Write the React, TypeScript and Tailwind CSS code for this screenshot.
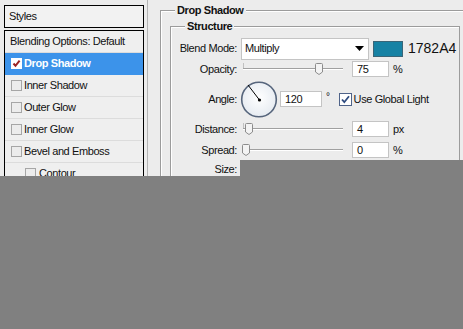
import React from "react";

function ListCheck({ checked = false }: { checked?: boolean }) {
  return (
    <svg width="11" height="11" viewBox="0 0 11 11" className="flex-none">
      <rect x="0.5" y="0.5" width="10" height="10" fill={checked ? "#ffffff" : "#ececec"} stroke={checked ? "#ffffff" : "#a6a6a6"} />
      {checked && <path d="M2.5 5.5 L4.5 7.8 L8.6 2.6" fill="none" stroke="#9b2323" strokeWidth="2" />}
    </svg>
  );
}

function Row({ children, selected = false, indent = false }: { children: React.ReactNode; selected?: boolean; indent?: boolean }) {
  return (
    <div
      className={
        "h-[22px] flex items-center border-b " +
        (selected ? "bg-[#3c93ea] border-[#3c93ea] text-white font-bold" : "bg-[#efefef] border-[#dcdcdc]") +
        (indent ? " pl-[20px]" : " pl-[6px]")
      }
    >
      {children}
    </div>
  );
}

function Slider({ pos }: { pos: number }) {
  return (
    <div className="relative ml-[6px] w-[100px] h-[16px] flex items-center">
      <div className="w-full h-[2px] border-t border-[#a0a0a0] bg-white" />
      <div className="absolute top-[2px] left-0 w-px h-[5px] bg-[#c0c0c0]" />
      <svg width="8" height="12" viewBox="0 0 8 12" className="absolute top-[2px]" style={{ left: pos }}>
        <path d="M1.5 0.5 H6.5 Q7.5 0.5 7.5 1.5 V9 L4 11.5 L0.5 9 V1.5 Q0.5 0.5 1.5 0.5 Z" fill="#f3f3f3" stroke="#8c8c8c" />
      </svg>
    </div>
  );
}

function Field({ value, w, ml }: { value: string; w: string; ml: string }) {
  return (
    <div className={`${w} ${ml} h-[16px] bg-white border border-[#c4c4c4] flex items-center pl-[4px] text-[11px]`}>{value}</div>
  );
}

export default function App() {
  const lbl = "w-[66px] flex-none text-right";
  return (
    <div className="relative w-[463px] h-[329px] overflow-hidden bg-[#ececec] font-['Liberation_Sans',Arial,sans-serif] text-[11px] tracking-[-0.4px] text-[#111] flex">
      {/* Left styles list */}
      <div className="ml-[4px] mt-[5px] w-[140px] flex-none flex flex-col">
        <div className="h-[23px] border border-black bg-[#f2f2f2] flex items-center pl-[4px]">Styles</div>
        <div className="mt-[2px] border-t border-l border-r border-black flex flex-col">
          <Row>
            <span className="ml-[-1px]">Blending Options: Default</span>
          </Row>
          <Row selected>
            <ListCheck checked />
            <span className="ml-[2px]">Drop Shadow</span>
          </Row>
          <Row>
            <ListCheck />
            <span className="ml-[2px]">Inner Shadow</span>
          </Row>
          <Row>
            <ListCheck />
            <span className="ml-[2px]">Outer Glow</span>
          </Row>
          <Row>
            <ListCheck />
            <span className="ml-[2px]">Inner Glow</span>
          </Row>
          <Row>
            <ListCheck />
            <span className="ml-[2px]">Bevel and Emboss</span>
          </Row>
          <Row indent>
            <ListCheck />
            <span className="ml-[3px]">Contour</span>
          </Row>
        </div>
      </div>

      {/* thin separator */}
      <div className="ml-[3px] w-px h-full bg-[#b4b4b4] flex-none" />

      {/* Outer fieldset */}
      <div className="ml-[12px] mt-[10px] w-[320px] flex-none border-t border-l border-[#9c9c9c] shadow-[inset_1px_1px_0_#ffffff] flex flex-col">
        <div className="-mt-[7px] ml-[14px] self-start bg-[#ececec] px-[2px] font-bold leading-[13px]">Drop Shadow</div>
        <div className="ml-[9px] mt-[9px] w-[290px] h-[300px] border-t border-l border-r border-[#9c9c9c] shadow-[inset_1px_1px_0_#ffffff] flex flex-col">
          <div className="-mt-[7px] ml-[14px] self-start bg-[#ececec] px-[2px] font-bold leading-[13px]">Structure</div>

          {/* Blend mode */}
          <div className="mt-[4px] h-[23px] flex items-center">
            <div className={lbl}>Blend Mode:</div>
            <div className="ml-[4px] w-[128px] h-[22px] bg-white border border-[#c4c4c4] flex items-center pl-[3px]">
              <span className="flex-1">Multiply</span>
              <svg width="9" height="5" viewBox="0 0 9 5" className="mr-[4px]">
                <path d="M0 0 H9 L4.5 5 Z" fill="#000" />
              </svg>
            </div>
            <div className="ml-[4px] w-[30px] h-[16px] bg-[#1782A4] border border-[#3a6577]" />
            <div className="ml-[5px] text-[14px] tracking-[0px] text-[#111]">1782A4</div>
          </div>

          {/* Opacity */}
          <div className="mt-[1px] h-[16px] flex items-center">
            <div className={lbl}>Opacity:</div>
            <Slider pos={72} />
            <Field value="75" w="w-[37px]" ml="ml-[9px]" />
            <div className="ml-[4px]">%</div>
          </div>

          {/* Angle */}
          <div className="mt-[1px] h-[42px] flex items-center">
            <div className={lbl}>Angle:</div>
            <svg width="38" height="38" viewBox="0 0 38 38" className="ml-[3px] flex-none">
              <defs>
                <radialGradient id="dial" cx="50%" cy="45%" r="55%">
                  <stop offset="0%" stopColor="#ffffff" />
                  <stop offset="100%" stopColor="#e6ebf1" />
                </radialGradient>
              </defs>
              <circle cx="19" cy="19.5" r="17.3" fill="url(#dial)" stroke="#56657c" strokeWidth="1.6" />
              <line x1="19.5" y1="20" x2="8" y2="5" stroke="#000" strokeWidth="1" />
              <circle cx="19.5" cy="20" r="1.6" fill="#000" />
            </svg>
            <Field value="120" w="w-[42px]" ml="ml-[2px]" />
            <div className="ml-[4px] self-start mt-[11px] text-[10px]">°</div>
            <svg width="13" height="13" viewBox="0 0 13 13" className="ml-[9px] flex-none">
              <rect x="0.5" y="0.5" width="12" height="12" fill="#ffffff" stroke="#4f6389" />
              <path d="M3 6.5 L5.3 9.2 L10 3.2" fill="none" stroke="#2f4c80" strokeWidth="1.8" />
            </svg>
            <div className="ml-[2px]">Use Global Light</div>
          </div>

          {/* Distance */}
          <div className="mt-[1px] h-[16px] flex items-center">
            <div className={lbl}>Distance:</div>
            <Slider pos={2} />
            <Field value="4" w="w-[37px]" ml="ml-[9px]" />
            <div className="ml-[4px]">px</div>
          </div>

          {/* Spread */}
          <div className="mt-[5px] h-[16px] flex items-center">
            <div className={lbl}>Spread:</div>
            <Slider pos={-1} />
            <Field value="0" w="w-[37px]" ml="ml-[9px]" />
            <div className="ml-[4px]">%</div>
          </div>

          {/* Size */}
          <div className="mt-[3px] h-[16px] flex items-center">
            <div className={lbl}>Size:</div>
            <Slider pos={-1} />
          </div>
        </div>
      </div>

      {/* gray overlay blocks */}
      <div className="absolute left-[240px] top-[160px] right-0 bottom-0 bg-[#808080]" />
      <div className="absolute left-0 top-[176px] right-0 bottom-0 bg-[#808080]" />
    </div>
  );
}
